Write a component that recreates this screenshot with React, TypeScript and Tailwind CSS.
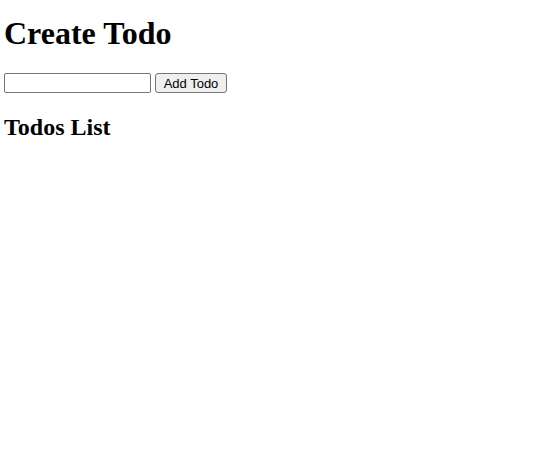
import { useState } from 'react';

export default function App() {
  const [text, setText] = useState('');
  const [todos, setTodos] = useState<string[]>([]);

  const addTodo = () => {
    if (!text.trim()) return;
    setTodos([...todos, text]);
    setText('');
  };

  return (
    <div className="pl-1 pt-[15px] bg-white min-h-[466px] text-black font-['Liberation_Serif',serif]">
      <h1 className="text-[32px] font-bold leading-[37px] mb-[21px]">Create Todo</h1>
      <div className="flex items-center gap-1">
        <input
          value={text}
          onChange={(e) => setText(e.target.value)}
          className="w-[147px] h-[20px] border border-[#767676] rounded-[2px] px-1 text-[13px] font-['Liberation_Sans',sans-serif] outline-none"
        />
        <button
          onClick={addTodo}
          className="w-[72px] h-[20px] border border-[#767676] rounded-[3px] bg-[#efefef] text-[13px] leading-none font-['Liberation_Sans',sans-serif]"
        >
          Add Todo
        </button>
      </div>
      <h2 className="text-[24px] font-bold leading-[28px] mt-[20px]">Todos List</h2>
      <ul className="mt-4">
        {todos.map((t, i) => (
          <li key={i}>{t}</li>
        ))}
      </ul>
    </div>
  );
}
